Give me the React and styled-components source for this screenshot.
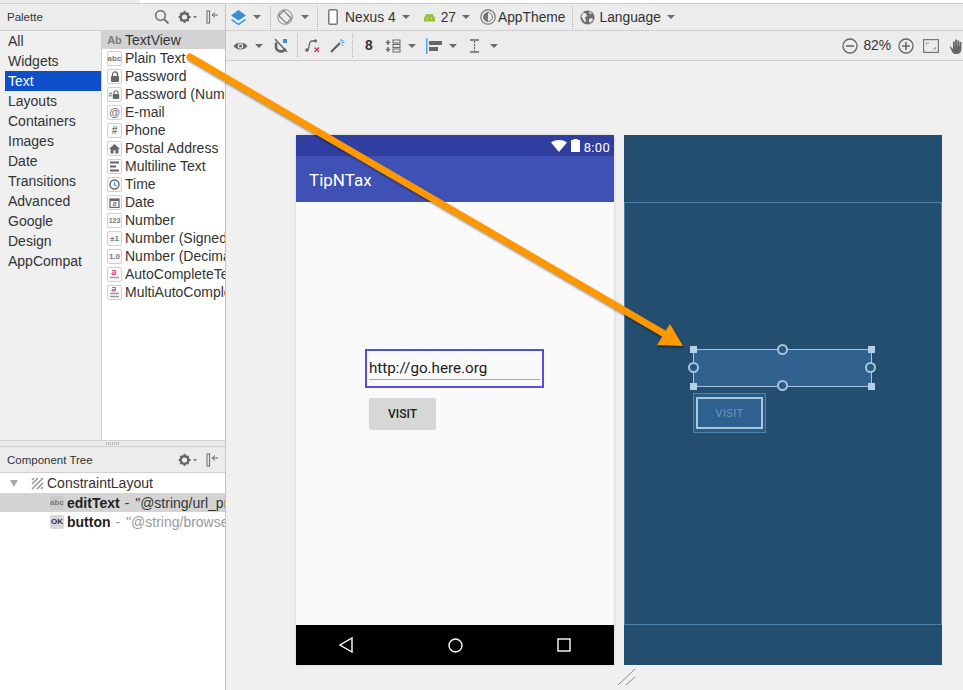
import React from 'react';
import styled, { createGlobalStyle } from 'styled-components';

const GlobalStyle = createGlobalStyle`
	html, body { margin: 0; padding: 0; background: #f0f0f0; }
	body { font-family: "Liberation Sans", Arial, sans-serif; color: #2b2b2b; }
`;

const Page = styled.div`
	position: relative;
	display: flex;
	flex-direction: column;
	width: 963px;
	height: 690px;
	overflow: hidden;
`;

const TopStrip = styled.div`
	height: 3px;
	flex: none;
	background: linear-gradient(90deg, #ececec 140px, #ffffff 140px);
	border-bottom: 1px solid #cdcdcd;
`;

const Workspace = styled.div`
	display: flex;
	flex: 1;
	min-height: 0;
`;

const Sidebar = styled.div`
	display: flex;
	flex-direction: column;
	flex: none;
	width: 225px;
	border-right: 1px solid #c4c4c4;
	background: #ffffff;
`;

const PanelHeader = styled.div`
	display: flex;
	align-items: center;
	flex: none;
	box-sizing: border-box;
	height: ${p => p.$height}px;
	padding: 0 7px 0 7px;
	background: #ececec;
	border-bottom: 1px solid #cfcfcf;
	font-size: 11.5px;
	color: #333;
	svg { flex: none; }
`;

const HeaderTitle = styled.span`
	flex: 1;
`;

const PaletteBody = styled.div`
	display: flex;
	flex: none;
	height: 409px;
`;

const Categories = styled.div`
	flex: none;
	width: 101px;
	background: #f0f0f0;
	border-right: 1px solid #cfcfcf;
`;

const Category = styled.div`
	height: 20px;
	line-height: 20px;
	margin-left: 5px;
	padding-left: 3px;
	font-size: 14px;
	background: ${p => (p.$active ? '#0d50c9' : 'transparent')};
	color: ${p => (p.$active ? '#ffffff' : '#333')};
`;

const Items = styled.div`
	flex: 1;
	min-width: 0;
	overflow: hidden;
	background: #fff;
`;

const Item = styled.div`
	display: flex;
	align-items: center;
	box-sizing: border-box;
	height: 18px;
	padding-left: 5px;
	gap: 3px;
	font-size: 14px;
	white-space: nowrap;
	color: #333;
	background: ${p => (p.$head ? '#d2d2d2' : 'transparent')};
`;

const ItemIcon = styled.span`
	display: flex;
	align-items: center;
	justify-content: center;
	flex: none;
	box-sizing: border-box;
	width: 15px;
	height: 15px;
	border: ${p => (p.$plain ? '0' : '1px solid #d0d0d0')};
	border-radius: 2px;
	background: ${p => (p.$plain ? 'transparent' : '#fbfbfb')};
	font-size: ${p => p.$size || 9}px;
	font-weight: bold;
	color: #7a7a7a;
`;

const Grip = styled.div`
	flex: none;
	height: 5px;
	background: #ececec;
	border-top: 1px solid #cfcfcf;
	border-bottom: 1px solid #cfcfcf;
	display: flex;
	justify-content: center;
	align-items: center;
	&::before {
		content: '';
		width: 14px;
		height: 3px;
		background: repeating-linear-gradient(90deg, #b5b5b5 0 1px, transparent 1px 2px);
	}
`;

const TreeRow = styled.div`
	display: flex;
	align-items: center;
	box-sizing: border-box;
	height: ${p => p.$height || 19}px;
	padding-left: ${p => p.$indent}px;
	gap: 3px;
	font-size: 14px;
	white-space: nowrap;
	overflow: hidden;
	background: ${p => (p.$selected ? '#d4d4d4' : 'transparent')};
	color: #333;
	svg { flex: none; }
`;

const TreeName = styled.b`
	color: #1f1f1f;
`;

const TreeValue = styled.span`
	margin-left: 2px;
	word-spacing: 2px;
	color: ${p => (p.$muted ? '#9a9a9a' : '#333')};
`;

const TreeBadge = styled.span`
	display: flex;
	align-items: center;
	justify-content: center;
	flex: none;
	width: 14px;
	height: 14px;
	border-radius: 2px;
	background: ${p => (p.$dark ? '#d8d8d8' : '#c9c9c9')};
	color: ${p => (p.$dark ? '#333' : '#777')};
	font-size: 8px;
	font-weight: bold;
`;

const Main = styled.div`
	display: flex;
	flex-direction: column;
	flex: 1;
	min-width: 0;
	background: #f0f0f0;
`;

const Toolbar = styled.div`
	display: flex;
	align-items: center;
	flex: none;
	height: ${p => p.$height}px;
	box-sizing: border-box;
	background: #ececec;
	border-bottom: 1px solid #cfcfcf;
	padding-left: ${p => p.$pad}px;
	font-size: 13.8px;
	color: #333;
	white-space: nowrap;
	overflow: hidden;
`;

const Tool = styled.span`
	display: inline-flex;
	align-items: center;
	flex: none;
	margin-left: ${p => p.$gap || 0}px;
	margin-right: ${p => p.$bleed || 0}px;
	font-weight: ${p => (p.$bold ? 'bold' : 'normal')};
`;

const Sep = styled.span`
	flex: none;
	height: 23px;
	margin-left: ${p => p.$gap}px;
	border-left: 1px dotted #b0b0b0;
`;

const Caret = styled.span`
	flex: none;
	width: 0;
	height: 0;
	margin-left: ${p => p.$gap}px;
	border-left: 4px solid transparent;
	border-right: 4px solid transparent;
	border-top: 4px solid #6a6a6a;
`;

const Spacer = styled.span`
	flex: 1;
`;

const Canvas = styled.div`
	display: grid;
	grid-template-columns: 318px 318px;
	grid-template-rows: 530px auto;
	column-gap: 10px;
	padding: 74px 0 0 70px;
`;

const Phone = styled.div`
	display: flex;
	flex-direction: column;
	background: #fafafa;
	box-shadow: 0 0 4px rgba(0, 0, 0, 0.12);
`;

const StatusBar = styled.div`
	display: flex;
	align-items: center;
	justify-content: flex-end;
	gap: 4px;
	flex: none;
	height: 21px;
	padding-right: 4px;
	background: #303f9f;
	color: #fff;
	font-family: Roboto, sans-serif;
	font-size: 13px;
	letter-spacing: 0.3px;
`;

const Clock = styled.span`
	padding-top: 4px;
`;

const AppBar = styled.div`
	display: flex;
	align-items: center;
	flex: none;
	box-sizing: border-box;
	height: 46px;
	padding: 2px 0 0 13px;
	background: #3f51b5;
	color: #fff;
	font-family: Roboto, sans-serif;
	font-size: 17px;
`;

const PhoneContent = styled.div`
	flex: 1;
	padding: 147px 0 0 69px;
`;

const EditBox = styled.div`
	box-sizing: border-box;
	width: 179px;
	height: 39px;
	border: 2px solid #5050e8;
	padding: 7px 2px 0;
`;

const EditText = styled.div`
	box-sizing: border-box;
	height: 22px;
	border-bottom: 1px solid #a8a8a8;
	line-height: 20px;
	font-family: Roboto, sans-serif;
	font-size: 15.2px;
	color: #1c1c1c;
`;

const VisitButton = styled.div`
	display: flex;
	align-items: center;
	justify-content: center;
	width: 67px;
	height: 31px;
	margin: 10px 0 0 4px;
	border-radius: 2px;
	background: #d6d7d7;
	box-shadow: 0 1px 1px rgba(0, 0, 0, 0.15);
	font-family: Roboto, sans-serif;
	font-size: 12px;
	font-weight: 500;
	color: #1e1e1e;
`;

const NavBar = styled.div`
	display: flex;
	flex: none;
	align-items: center;
	justify-content: space-between;
	height: 40px;
	padding: 0 43px;
	background: #000;
`;

const Blueprint = styled.div`
	display: flex;
	flex-direction: column;
	background: #234e70;
`;

const BlueprintTop = styled.div`
	flex: none;
	height: 67px;
`;

const BlueprintBody = styled.div`
	flex: 1;
	box-sizing: border-box;
	padding: 146px 0 0 68px;
	border: 1px solid #4f81ab;
`;

const BlueprintBottom = styled.div`
	flex: none;
	height: 40px;
`;

const Selection = styled.div`
	position: relative;
	box-sizing: border-box;
	width: 179px;
	height: 38px;
	border: 1px solid #a6c5dc;
	background: #30618f;
`;

const Square = styled.span`
	position: absolute;
	width: 7px;
	height: 7px;
	left: ${p => (p.$x ? 'calc(100% - 3px)' : '-4px')};
	top: ${p => (p.$y ? 'calc(100% - 3px)' : '-4px')};
	background: #b4d0e6;
`;

const Anchor = styled.span`
	position: absolute;
	box-sizing: border-box;
	width: 11px;
	height: 11px;
	left: calc(${p => p.$x}% - 6px);
	top: calc(${p => p.$y}% - 6px);
	border: 2px solid #a6c5dc;
	border-radius: 50%;
	background: #2a5980;
`;

const GhostOuter = styled.div`
	box-sizing: border-box;
	width: 73px;
	height: 40px;
	margin-top: 6px;
	padding: 3px 2px;
	border: 1px solid #4f81ab;
	background: #2b5a82;
`;

const GhostInner = styled.div`
	display: flex;
	align-items: center;
	justify-content: center;
	box-sizing: border-box;
	height: 100%;
	border: 2px solid #a9c6dd;
	background: #2e6090;
	font-family: Roboto, sans-serif;
	font-size: 11px;
	letter-spacing: 0.4px;
	color: #6c98bd;
`;

const ResizeMark = styled.svg`
	grid-column: 2;
	margin: 3px 0 0 -7px;
`;

const ArrowLayer = styled.svg`
	position: absolute;
	left: 0;
	top: 0;
	pointer-events: none;
	filter: drop-shadow(1px 2px 1px rgba(0, 0, 0, 0.4));
`;

const Icon = ({ size = 16, w, h, children, vb }) => (
	<svg width={w || size} height={h || size} viewBox={vb || `0 0 ${w || size} ${h || size}`}>
		{children}
	</svg>
);

const Search = () => (
	<Icon>
		<circle cx="6.5" cy="6.5" r="4.8" fill="none" stroke="#777" strokeWidth="1.7" />
		<path d="M10 10l4.5 4.5" stroke="#777" strokeWidth="2" />
	</Icon>
);

const Gear = () => (
	<Icon w={19} h={14}>
		<circle cx="6.5" cy="7" r="3.8" fill="none" stroke="#666" strokeWidth="2.4" />
		<path d="M6.5 .8v3M6.5 10v3M.6 7h3M9.6 7h3M2.4 2.9l2 2M8.6 9.1l2 2M10.6 2.9l-2 2M4.4 9.1l-2 2" stroke="#666" strokeWidth="1.8" />
		<path d="M15 6h4l-2 2.4z" fill="#777" />
	</Icon>
);

const Collapse = () => (
	<Icon w={12} h={14}>
		<rect x="1" y="1" width="2.6" height="12" fill="none" stroke="#666" strokeWidth="1" />
		<path d="M6 5h6M6 5l3-2.5M6 5l3 2.5" stroke="#666" fill="none" strokeWidth="1" />
	</Icon>
);

const Lock = ({ small }) => (
	<svg width={small ? 8 : 10} height={small ? 9 : 11} viewBox="0 0 10 11">
		<path d="M2.5 5V3.4a2.5 2.5 0 0 1 5 0V5" fill="none" stroke="#666" strokeWidth="1.3" />
		<rect x="1" y="5" width="8" height="6" rx="1" fill="#666" />
	</svg>
);

const paletteIcons = {
	ab: <ItemIcon $plain $size={11}>Ab</ItemIcon>,
	abc: <ItemIcon $size={8}>abc</ItemIcon>,
	lock: <ItemIcon><Lock /></ItemIcon>,
	numLock: <ItemIcon $size={7}>#<Lock small /></ItemIcon>,
	at: <ItemIcon $size={11}>@</ItemIcon>,
	hash: <ItemIcon $size={10}>#</ItemIcon>,
	home: (
		<ItemIcon>
			<Icon size={11}><path d="M5.5 1L0 6h1.6v4.5h3V7.2h1.8v3.3h3V6H11z" fill="#666" /></Icon>
		</ItemIcon>
	),
	lines: (
		<ItemIcon>
			<Icon size={11}><path d="M1 1.5h9M1 5.5h6M1 9.5h9" stroke="#666" strokeWidth="1.8" /></Icon>
		</ItemIcon>
	),
	time: (
		<ItemIcon>
			<Icon size={11}>
				<circle cx="5.5" cy="5.5" r="4.5" fill="none" stroke="#666" strokeWidth="1.4" />
				<path d="M5.5 2.8v3l2 1.2" fill="none" stroke="#4a90d9" strokeWidth="1.2" />
			</Icon>
		</ItemIcon>
	),
	date: (
		<ItemIcon>
			<Icon size={11}>
				<rect x="1" y="2" width="9" height="8.5" fill="none" stroke="#666" strokeWidth="1.2" />
				<path d="M1 3h9" stroke="#666" strokeWidth="2" />
				<path d="M4 5.5h3v1.6H4.2v1.6H7" fill="none" stroke="#666" strokeWidth=".8" />
			</Icon>
		</ItemIcon>
	),
	n123: <ItemIcon $size={7}>123</ItemIcon>,
	signed: <ItemIcon $size={8}>±1</ItemIcon>,
	decimal: <ItemIcon $size={8}>1.0</ItemIcon>,
	auto: (
		<ItemIcon>
			<Icon size={11}>
				<path d="M3 1.5h3.4v4H3v-1.6h3" fill="none" stroke="#e0457b" strokeWidth="1" />
				<path d="M1 8.5h9" stroke="#999" strokeWidth="1.4" />
			</Icon>
		</ItemIcon>
	),
	multi: (
		<ItemIcon>
			<Icon size={11}>
				<path d="M3 .5h3.4V4H3V2.6h3" fill="none" stroke="#e0457b" strokeWidth="1" />
				<path d="M1 6.5h9M1 9.5h9" stroke="#999" strokeWidth="1.4" />
			</Icon>
		</ItemIcon>
	),
};

const categories = ['All', 'Widgets', 'Text', 'Layouts', 'Containers', 'Images', 'Date', 'Transitions', 'Advanced', 'Google', 'Design', 'AppCompat'];

const items = [
	['ab', 'TextView'],
	['abc', 'Plain Text'],
	['lock', 'Password'],
	['numLock', 'Password (Numeric)'],
	['at', 'E-mail'],
	['hash', 'Phone'],
	['home', 'Postal Address'],
	['lines', 'Multiline Text'],
	['time', 'Time'],
	['date', 'Date'],
	['n123', 'Number'],
	['signed', 'Number (Signed)'],
	['decimal', 'Number (Decimal)'],
	['auto', 'AutoCompleteTextView'],
	['multi', 'MultiAutoCompleteTextView'],
];

const Palette = () => (
	<>
		<PanelHeader $height={27}>
			<HeaderTitle>Palette</HeaderTitle>
			<Search />
			<Tool $gap={8}><Gear /></Tool>
			<Tool $gap={9}><Collapse /></Tool>
		</PanelHeader>
		<PaletteBody>
			<Categories>
				{categories.map(c => (
					<Category key={c} $active={c === 'Text'}>{c}</Category>
				))}
			</Categories>
			<Items>
				{items.map(([icon, label], i) => (
					<Item key={label} $head={i === 0}>
						{paletteIcons[icon]}
						{label}
					</Item>
				))}
			</Items>
		</PaletteBody>
	</>
);

const ComponentTree = () => (
	<>
		<PanelHeader $height={26}>
			<HeaderTitle>Component Tree</HeaderTitle>
			<Gear />
			<Tool $gap={9}><Collapse /></Tool>
		</PanelHeader>
		<TreeRow $indent={10} $height={20}>
			<Icon w={8} h={7}><path d="M0 0h8L4 7z" fill="#a9a9a9" /></Icon>
			<Tool $gap={10}>
				<Icon size={13}>
					<path d="M1 12L12 1M1 7l6-6M6 12l6-6M1 3l2-2M10 12l2-2" stroke="#999" strokeWidth="1.6" />
				</Icon>
			</Tool>
			ConstraintLayout
		</TreeRow>
		<TreeRow $indent={50} $selected>
			<TreeBadge>abc</TreeBadge>
			<TreeName>editText</TreeName>
			<TreeValue>- "@string/url_prompt"</TreeValue>
		</TreeRow>
		<TreeRow $indent={50}>
			<TreeBadge $dark>OK</TreeBadge>
			<TreeName>button</TreeName>
			<TreeValue $muted>- "@string/browse"</TreeValue>
		</TreeRow>
	</>
);

const TopToolbar = () => (
	<Toolbar $height={27} $pad={4}>
		<Icon w={17} h={17}>
			<path d="M8.5 1L16 6.5 8.5 11.5 1 6.5z" fill="#3592d8" />
			<path d="M2 10l6.5 4.5L15 10l1 1-7.5 5.3L1 11z" fill="#3592d8" />
		</Icon>
		<Caret $gap={6} />
		<Sep $gap={9} />
		<Tool $gap={6}>
			<Icon size={16}>
				<circle cx="8" cy="8" r="7.3" fill="none" stroke="#888" strokeWidth="1" />
				<rect x="4.5" y="2.5" width="7" height="11" rx="1" transform="rotate(-45 8 8)" fill="none" stroke="#777" strokeWidth="1.2" />
			</Icon>
		</Tool>
		<Caret $gap={8} />
		<Sep $gap={8} />
		<Tool $gap={10}>
			<Icon w={10} h={16}>
				<rect x=".8" y=".8" width="8.4" height="14.4" rx="1.2" fill="#fff" stroke="#777" strokeWidth="1.5" />
			</Icon>
		</Tool>
		<Tool $gap={7}>Nexus 4</Tool>
		<Caret $gap={6} />
		<Tool $gap={13}>
			<Icon w={13} h={9}>
				<path d="M1 8.5V6a5.5 5 0 0 1 11 0v2.5z" fill="#97c03c" />
				<path d="M3 1l1.5 2M10 1L8.5 3" stroke="#97c03c" strokeWidth="1" />
				<circle cx="4.5" cy="5.5" r=".7" fill="#ececec" />
				<circle cx="8.5" cy="5.5" r=".7" fill="#ececec" />
			</Icon>
		</Tool>
		<Tool $gap={5}>27</Tool>
		<Caret $gap={6} />
		<Tool $gap={10}>
			<Icon size={16}>
				<circle cx="8" cy="8" r="7.2" fill="none" stroke="#777" strokeWidth="1.2" />
				<path d="M8 3.5a4.5 4.5 0 0 0 0 9z" fill="#777" />
				<circle cx="8" cy="8" r="4.5" fill="none" stroke="#777" strokeWidth="1" />
			</Icon>
		</Tool>
		<Tool $gap={2}>AppTheme</Tool>
		<Sep $gap={7} />
		<Tool $gap={7}>
			<Icon size={15}>
				<circle cx="7.5" cy="7.5" r="7" fill="#6e6e6e" />
				<path d="M3 2.5l3 1 1 2.5-2 1.5 1 3-1 2-2-3-1.5-3zM9 9l3-1 1 2-3 3-1-2zM9 1.5l3 1.5-2 1.5z" fill="#ececec" />
			</Icon>
		</Tool>
		<Tool $gap={4}>Language</Tool>
		<Caret $gap={6} />
	</Toolbar>
);

const SecondToolbar = () => (
	<Toolbar $height={30} $pad={7}>
		<Icon w={15} h={12}>
			<path d="M.5 6C3 1.5 12 1.5 14.5 6 12 10.5 3 10.5 .5 6z" fill="#666" />
			<circle cx="7.5" cy="6" r="2.7" fill="#ececec" />
			<circle cx="7.5" cy="6" r="1.5" fill="#666" />
		</Icon>
		<Caret $gap={7} />
		<Tool $gap={11}>
			<Icon w={14} h={15}>
				<path d="M1 1l12 13" stroke="#666" strokeWidth="1.4" />
				<path d="M2 4.5V8a5 5 0 0 0 9.5 2.5" fill="none" stroke="#666" strokeWidth="2.6" />
				<rect x="9" y="1" width="4" height="4" fill="#3592d8" />
			</Icon>
		</Tool>
		<Sep $gap={9} />
		<Tool $gap={6}>
			<Icon w={16} h={15}>
				<path d="M3 12c3 0 1-9 5-9h3" fill="none" stroke="#666" strokeWidth="1.3" />
				<circle cx="3" cy="12" r="1.8" fill="#666" />
				<circle cx="11.5" cy="2.8" r="1.6" fill="#666" />
				<path d="M10.5 9.5l4.5 4.5M15 9.5L10.5 14" stroke="#c9405a" strokeWidth="1.5" />
			</Icon>
		</Tool>
		<Tool $gap={10}>
			<Icon w={16} h={15}>
				<path d="M1 14l9-9" stroke="#666" strokeWidth="2.4" />
				<path d="M11 1v2.5M14.5 4.5H12M13.5 2L12 3.5M13 8l-1-1.5" stroke="#3592d8" strokeWidth="1" />
			</Icon>
		</Tool>
		<Sep $gap={6} />
		<Tool $gap={12} $bold>8</Tool>
		<Tool $gap={12}>
			<Icon w={16} h={14}>
				<path d="M3 1v5M.8 3.5h4.4M3 8v5M.8 10.5h4.4" stroke="#666" strokeWidth="1.4" />
				<rect x="8" y="1" width="7" height="3" fill="none" stroke="#666" />
				<rect x="8" y="5.5" width="7" height="3" fill="none" stroke="#666" />
				<rect x="8" y="10" width="7" height="3" fill="none" stroke="#666" />
			</Icon>
		</Tool>
		<Caret $gap={7} />
		<Tool $gap={10}>
			<Icon w={16} h={16}>
				<path d="M.8 0v16" stroke="#3592d8" strokeWidth="1.2" />
				<rect x="3" y="3" width="13" height="4" fill="#666" />
				<rect x="3" y="9" width="9" height="4" fill="#666" />
			</Icon>
		</Tool>
		<Caret $gap={7} />
		<Tool $gap={13}>
			<Icon w={9} h={14}>
				<path d="M0 1h9M0 13h9" stroke="#666" strokeWidth="1.6" />
				<path d="M4.5 2v10" stroke="#666" strokeWidth="1.2" strokeDasharray="2 1" />
			</Icon>
		</Tool>
		<Caret $gap={11} />
		<Spacer />
		<Icon size={16}>
			<circle cx="8" cy="8" r="7" fill="none" stroke="#666" strokeWidth="1.3" />
			<path d="M4 8h8" stroke="#666" strokeWidth="1.6" />
		</Icon>
		<Tool $gap={5}>82%</Tool>
		<Tool $gap={7}>
			<Icon size={16}>
				<circle cx="8" cy="8" r="7" fill="none" stroke="#666" strokeWidth="1.3" />
				<path d="M4 8h8M8 4v8" stroke="#666" strokeWidth="1.6" />
			</Icon>
		</Tool>
		<Tool $gap={9}>
			<Icon w={16} h={14}>
				<rect x=".6" y=".6" width="14.8" height="12.8" fill="none" stroke="#777" strokeWidth="1.2" />
				<path d="M3.5 6V4H6M12.5 8v2H10" fill="none" stroke="#999" />
			</Icon>
		</Tool>
		<Tool $gap={10} $bleed={-2}>
			<Icon w={16} h={16}>
				<path d="M1 8l3 3V3.5h1.8V8h.4V1.5H8V8h.4V2.5h1.8V8h.4V4h1.8v7c0 3-2 5-4.5 5H6c-2 0-3-2-5-7z" fill="#666" />
			</Icon>
		</Tool>
	</Toolbar>
);

const Device = () => (
	<Phone>
		<StatusBar>
			<Icon w={16} h={12}><path d="M0 2.5C4-.8 12-.8 16 2.5L8 12z" fill="#fff" /></Icon>
			<Icon w={9} h={13}><path d="M2.5 1V0h4v1H9v12H0V1z" fill="#fff" /></Icon>
			<Clock>8:00</Clock>
		</StatusBar>
		<AppBar>TipNTax</AppBar>
		<PhoneContent>
			<EditBox>
				<EditText>http://go.here.org</EditText>
			</EditBox>
			<VisitButton>VISIT</VisitButton>
		</PhoneContent>
		<NavBar>
			<Icon w={14} h={16}><path d="M13 1v14L1 8z" fill="none" stroke="#fff" strokeWidth="1.4" /></Icon>
			<Icon size={15}><circle cx="7.5" cy="7.5" r="6.5" fill="none" stroke="#fff" strokeWidth="1.4" /></Icon>
			<Icon size={14}><rect x="1" y="1" width="12" height="12" fill="none" stroke="#fff" strokeWidth="1.4" /></Icon>
		</NavBar>
	</Phone>
);

const BlueprintView = () => (
	<Blueprint>
		<BlueprintTop />
		<BlueprintBody>
			<Selection>
				<Square />
				<Square $x />
				<Square $y />
				<Square $x $y />
				<Anchor $x={50} $y={0} />
				<Anchor $x={0} $y={50} />
				<Anchor $x={100} $y={50} />
				<Anchor $x={50} $y={100} />
			</Selection>
			<GhostOuter>
				<GhostInner>VISIT</GhostInner>
			</GhostOuter>
		</BlueprintBody>
		<BlueprintBottom />
	</Blueprint>
);

const App = () => (
	<Page>
		<GlobalStyle />
		<TopStrip />
		<Workspace>
			<Sidebar>
				<Palette />
				<Grip />
				<ComponentTree />
			</Sidebar>
			<Main>
				<TopToolbar />
				<SecondToolbar />
				<Canvas>
					<Device />
					<BlueprintView />
					<ResizeMark width="20" height="18" viewBox="0 0 20 18">
						<path d="M1 17L18 1M9 17l9-8" stroke="#8a8a8a" strokeWidth="1" />
					</ResizeMark>
				</Canvas>
			</Main>
		</Workspace>
		<ArrowLayer width="963" height="690" viewBox="0 0 963 690">
			<path d="M190 57L668 336" stroke="#ff9800" strokeWidth="7" strokeLinecap="round" />
			<path d="M670 324L683 346 657 345z" fill="#ff9800" />
		</ArrowLayer>
	</Page>
);

export default App;
